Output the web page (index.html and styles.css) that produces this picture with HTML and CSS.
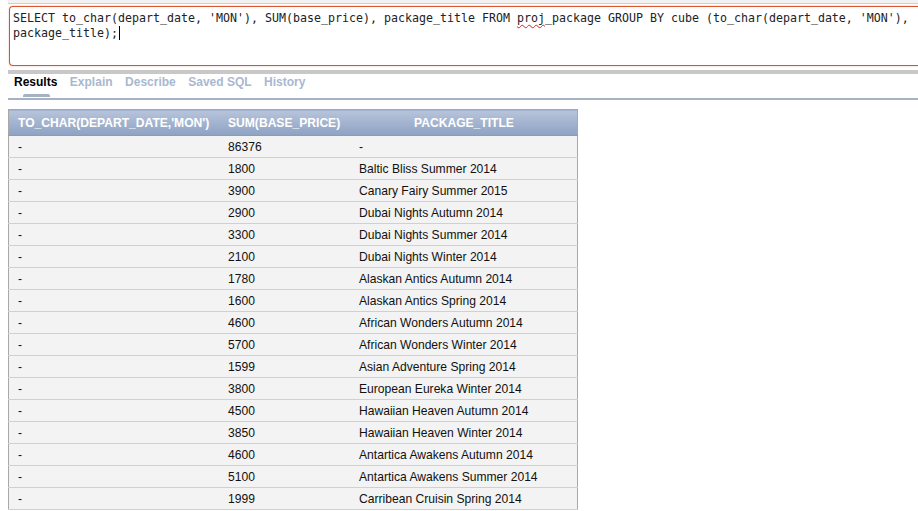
FILE: index.html
```html
<!DOCTYPE html>
<html>
<head>
<meta charset="utf-8">
<link rel="stylesheet" href="styles.css">
</head>
<body>
<div class="page">
  <div class="topstrip"></div>
  <div class="editor">SELECT to_char(depart_date, 'MON'), SUM(base_price), package_title FROM <span class="spell">proj</span>_package GROUP BY cube (to_char(depart_date, 'MON'),<br>package_title);<span class="caret"></span></div>
  <div class="splitter"></div>
  <div class="tabs">
    <span class="tab active">Results<span class="pill"></span></span>
    <span class="tab">Explain</span>
    <span class="tab">Describe</span>
    <span class="tab">Saved SQL</span>
    <span class="tab">History</span>
  </div>
  <table class="results">
    <thead>
      <tr><th class="c1">TO_CHAR(DEPART_DATE,'MON')</th><th class="c2">SUM(BASE_PRICE)</th><th class="c3 center">PACKAGE_TITLE</th></tr>
    </thead>
    <tbody>
      <tr><td>-</td><td>86376</td><td>-</td></tr>
      <tr><td>-</td><td>1800</td><td>Baltic Bliss Summer 2014</td></tr>
      <tr><td>-</td><td>3900</td><td>Canary Fairy Summer 2015</td></tr>
      <tr><td>-</td><td>2900</td><td>Dubai Nights Autumn 2014</td></tr>
      <tr><td>-</td><td>3300</td><td>Dubai Nights Summer 2014</td></tr>
      <tr><td>-</td><td>2100</td><td>Dubai Nights Winter 2014</td></tr>
      <tr><td>-</td><td>1780</td><td>Alaskan Antics Autumn 2014</td></tr>
      <tr><td>-</td><td>1600</td><td>Alaskan Antics Spring 2014</td></tr>
      <tr><td>-</td><td>4600</td><td>African Wonders Autumn 2014</td></tr>
      <tr><td>-</td><td>5700</td><td>African Wonders Winter 2014</td></tr>
      <tr><td>-</td><td>1599</td><td>Asian Adventure Spring 2014</td></tr>
      <tr><td>-</td><td>3800</td><td>European Eureka Winter 2014</td></tr>
      <tr><td>-</td><td>4500</td><td>Hawaiian Heaven Autumn 2014</td></tr>
      <tr><td>-</td><td>3850</td><td>Hawaiian Heaven Winter 2014</td></tr>
      <tr><td>-</td><td>4600</td><td>Antartica Awakens Autumn 2014</td></tr>
      <tr><td>-</td><td>5100</td><td>Antartica Awakens Summer 2014</td></tr>
      <tr><td>-</td><td>1999</td><td>Carribean Cruisin Spring 2014</td></tr>
    </tbody>
  </table>
</div>
</body>
</html>
```
FILE: styles.css
```css
html, body {
  margin: 0;
  padding: 0;
  background: #ffffff;
  overflow: hidden;
}
.page {
  width: 918px;
  height: 511px;
  overflow: hidden;
  font-family: "Liberation Sans", Arial, sans-serif;
}
.topstrip {
  margin-left: 8px;
  height: 3px;
  background: #f2f2f2;
  border-bottom: 1px solid #cfcfcf;
}
.editor {
  margin: 2px 0 0 9px;
  height: 50px;
  padding: 4px 0 4px 3px;
  border: 1px solid #d8542e;
  border-right: none;
  border-radius: 4px 0 0 4px;
  box-shadow: 0 0 2px rgba(230, 120, 90, 0.55);
  font-family: "DejaVu Sans Mono", monospace;
  font-size: 11.63px;
  line-height: 15px;
  color: #222;
  white-space: nowrap;
}
.spell {
  text-decoration: underline wavy #e02020;
  text-decoration-thickness: 1px;
  text-underline-offset: 2px;
}
.caret {
  display: inline-block;
  width: 0;
  height: 14px;
  border-left: 1px solid #000;
  vertical-align: -3px;
  margin-left: 1px;
}
.splitter {
  margin: 4px 0 0 8px;
  height: 4px;
  background: #c8c8c8;
}
.tabs {
  margin-left: 8px;
  height: 23px;
  padding: 1px 0 0 6px;
  display: flex;
  gap: 12.5px;
  border-bottom: 2px solid #a4b2c4;
}
.tab {
  position: relative;
  font-size: 12px;
  font-weight: bold;
  line-height: 14px;
  color: #a9b8d0;
}
.tab.active {
  color: #000;
}
.pill {
  position: absolute;
  left: 9px;
  top: 19px;
  width: 27px;
  height: 3px;
  background: #a4b2c4;
  border-radius: 2px 2px 0 0;
}
.results {
  margin: 9px 0 0 8px;
  border-collapse: collapse;
  width: 570px;
  table-layout: fixed;
  font-size: 12.1px;
  color: #111;
  border: 1px solid #a8a8a8;
  border-bottom: none;
}
.results th {
  height: 25px;
  padding: 0 7px;
  text-align: left;
  color: #fff;
  font-weight: bold;
  background: linear-gradient(#b7c4db, #8ea2c3);
  border-bottom: 1px solid #8a9cb8;
}
.results th.center {
  text-align: center;
}
.results th.c1 { width: 196px; padding-left: 9px; }
.results th.c2 { width: 116px; }
.results td {
  height: 21px;
  padding: 0 7px;
  background: #f3f3f3;
  border-bottom: 1px solid #d0d0d0;
  white-space: nowrap;
}
.results td:first-child { padding-left: 9px; }
.results td:last-child { padding-left: 8px; }
```
